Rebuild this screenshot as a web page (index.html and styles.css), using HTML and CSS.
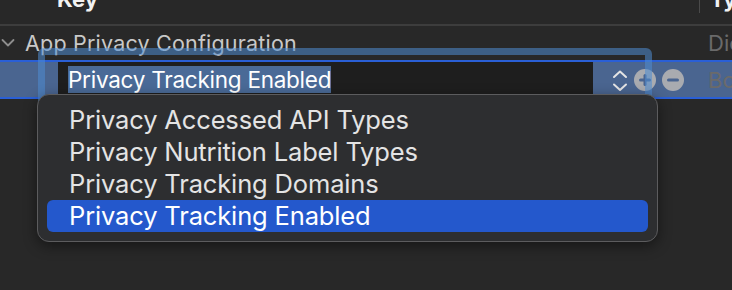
FILE: index.html
```html
<!DOCTYPE html>
<html lang="en">
<head>
    <meta charset="UTF-8">
    <title>Property List Editor</title>
    <link rel="stylesheet" href="styles.css">
</head>
<body>
    <div class="editor">
        <div class="header">
            <div class="col-key">Key</div>
            <div class="col-type">Type</div>
        </div>

        <div class="row">
            <div class="col-key">
                <svg class="disclosure" width="14" height="10" viewBox="0 0 14 10">
                    <path d="M1.5 2 L7 7.5 L12.5 2" fill="none" stroke="#8e8e8e" stroke-width="1.8" stroke-linecap="round" stroke-linejoin="round"/>
                </svg>
                <span class="key-label">App Privacy Configuration</span>
            </div>
            <div class="col-type dim">Dictionary</div>
        </div>

        <div class="row row-selected">
            <div class="col-key">
                <div class="key-field">
                    <span class="selection">Privacy Tracking Enabled</span>
                </div>
                <svg class="stepper" width="16" height="24" viewBox="0 0 16 24">
                    <path d="M2 8 L8 2.5 L14 8" fill="none" stroke="#e4e4e4" stroke-width="2" stroke-linecap="round" stroke-linejoin="round"/>
                    <path d="M2 15.5 L8 21 L14 15.5" fill="none" stroke="#e4e4e4" stroke-width="2" stroke-linecap="round" stroke-linejoin="round"/>
                </svg>
                <svg class="round-btn" width="22" height="22" viewBox="0 0 22 22">
                    <circle cx="11" cy="11" r="11" fill="#a9abb0"/>
                    <rect x="5" y="9.5" width="12" height="3" rx="1.5" fill="#4a6590"/>
                    <rect x="9.5" y="5" width="3" height="12" rx="1.5" fill="#4a6590"/>
                </svg>
                <svg class="round-btn" width="22" height="22" viewBox="0 0 22 22">
                    <circle cx="11" cy="11" r="11" fill="#a9abb0"/>
                    <rect x="5" y="9.5" width="12" height="3" rx="1.5" fill="#4a6590"/>
                </svg>
            </div>
            <div class="col-type dim">Boolean</div>
        </div>

        <div class="focus-ring"></div>

        <ul class="menu">
            <li class="menu-item">Privacy Accessed API Types</li>
            <li class="menu-item">Privacy Nutrition Label Types</li>
            <li class="menu-item">Privacy Tracking Domains</li>
            <li class="menu-item active">Privacy Tracking Enabled</li>
        </ul>
    </div>
</body>
</html>
```

FILE: styles.css
```css
body { margin: 0; background: #282828; font-family: Inter, "Noto Sans", sans-serif; overflow: hidden; }
.editor { position: relative; width: 732px; height: 290px; overflow: hidden; }

.header { display: flex; height: 24px; border-bottom: 2px solid #3d3d3d; overflow: hidden; }
.header .col-key { flex: 1; padding-left: 57px; margin-top: -14px; font-size: 22px; font-weight: 700; color: #f2f2f2; line-height: 26px; }
.header .col-type { position: relative; width: 22px; padding-left: 11px; margin-top: -14px; font-size: 22px; font-weight: 700; color: #f2f2f2; line-height: 26px; }
.header .col-type::before { content: ""; position: absolute; left: 0; top: 0; width: 1px; height: 27px; background: #4a4a4a; }

.row { display: flex; align-items: center; height: 34px; }
.row .col-key { flex: 1; display: flex; align-items: center; }
.row .col-type { width: 24px; padding-left: 9px; font-size: 22px; overflow: hidden; white-space: nowrap; }
.dim { color: #6a6a6a; }

.disclosure { margin-left: 1px; margin-right: 10px; }
.key-label { font-size: 21.5px; color: #c9c9c9; letter-spacing: 0.2px; }

.row-selected { height: 35px; background: #4a6590; border-top: 2px solid #2a5fd6; border-bottom: 2px solid #2a5fd6; }
.row-selected .col-key { align-self: stretch; }
.key-field { align-self: stretch; width: 525px; margin-left: 58px; padding-left: 10px; background: #1e1e1e; display: flex; align-items: center; }
.selection { background: #4a6a97; color: #ffffff; font-size: 22.5px; line-height: 27px; letter-spacing: -0.25px; }
.stepper { margin-left: 19px; margin-top: 2px; }
.round-btn { margin-left: 6px; }
.round-btn + .round-btn { margin-left: 6px; }

.focus-ring { position: absolute; left: 38px; top: 48px; width: 600px; height: 60px; border: 7px solid rgba(78, 140, 210, 0.55); border-radius: 6px; pointer-events: none; }

.menu { position: absolute; left: 37px; top: 94px; width: 601px; margin: 0; padding: 9px; list-style: none; background: #2d2e30; border: 1px solid #5c5c5e; border-radius: 12px; box-shadow: 0 4px 14px rgba(0, 0, 0, 0.45); }
.menu-item { height: 32px; line-height: 32px; padding-left: 22px; font-size: 25.5px; color: #e4e4e4; border-radius: 6px; letter-spacing: -0.15px; }
.menu-item.active { background: #2458cc; color: #ffffff; }
```
